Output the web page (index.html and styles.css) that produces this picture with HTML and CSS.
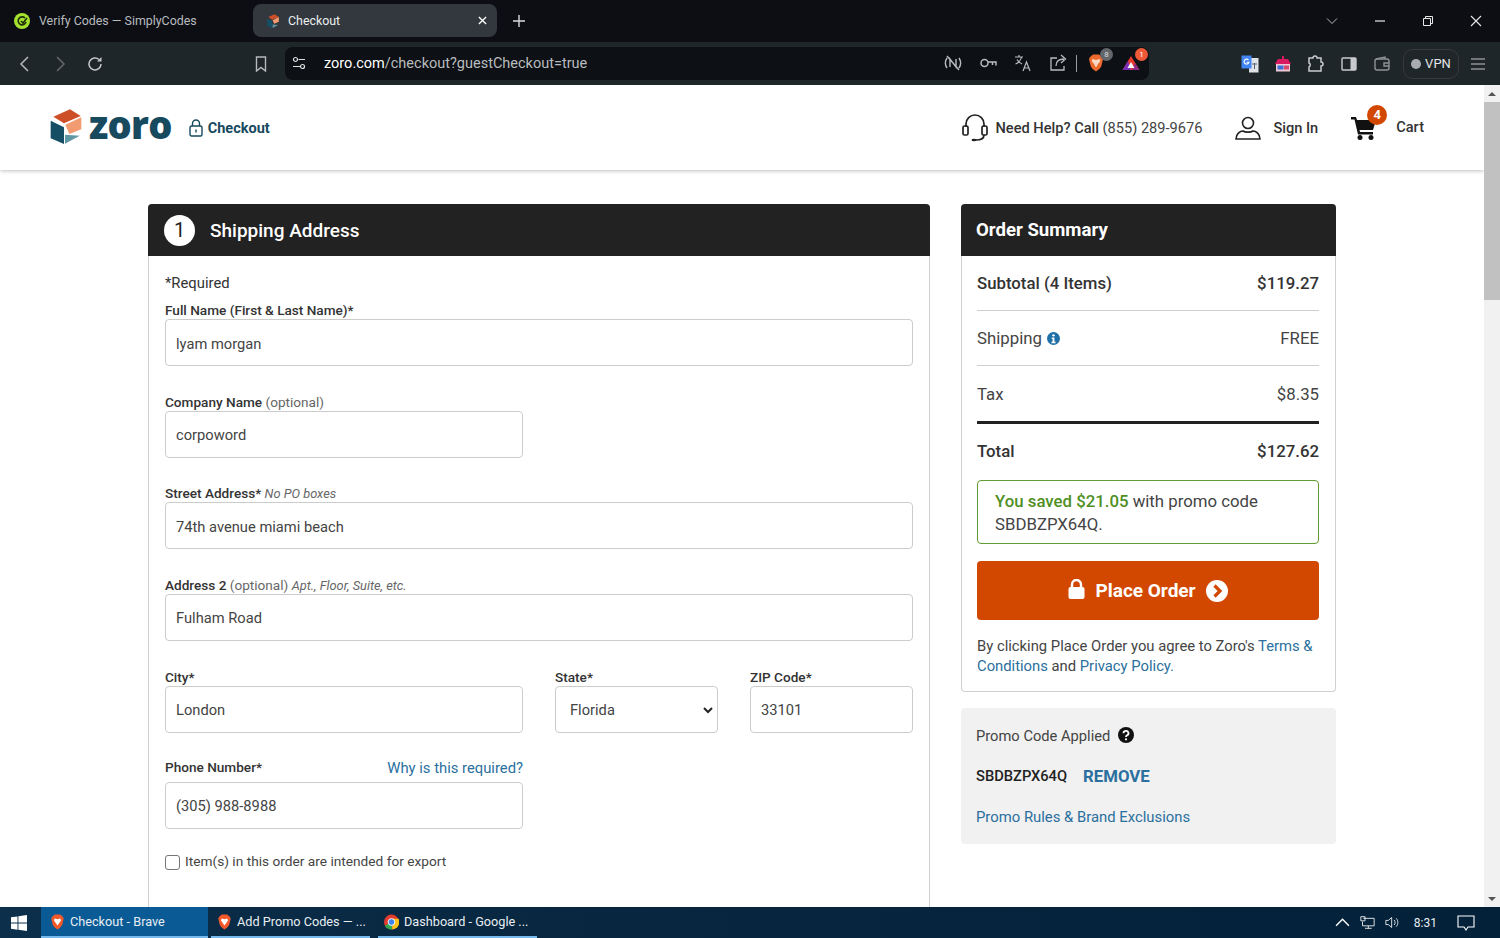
FILE: index.html
```html
<!DOCTYPE html>
<html lang="en">
<head>
    <meta charset="UTF-8">
    <title>Checkout</title>
    <link rel="stylesheet" href="styles.css">
</head>
<body>
    <div class="tabStrip">
        <div class="tab">
            <svg class="tabIcon" viewBox="0 0 16 16"><circle cx="8" cy="8" r="8" fill="#a4e22f"/><path d="M11 5a4 4 0 1 0 1 4M7 8l2 2 4-5" fill="none" stroke="#20300a" stroke-width="1.6"/></svg>
            <span>Verify Codes — SimplyCodes</span>
        </div>
        <div class="tab tabActive">
            <svg class="tabIcon" viewBox="0 0 44 46"><path d="M10 13l16-7 11 7-17 7z" fill="#cd4f27"/><path d="M37 13v12l-12 5-4-9z" fill="#f29b70"/><path d="M7 17l13 6v18L7 36z" fill="#164e66"/><path d="M21 32l14 1-14 8z" fill="#5f97a5"/></svg>
            <span>Checkout</span>
            <svg class="tabClose" viewBox="0 0 10 10"><path d="M1 1l8 8M9 1l-8 8" stroke="#fff" stroke-width="1.5"/></svg>
        </div>
        <svg class="newTab" viewBox="0 0 12 12"><path d="M6 0v12M0 6h12" stroke="#d8dadc" stroke-width="1.4"/></svg>
        <div class="windowBtns">
            <svg class="winIcon" viewBox="0 0 12 12"><path d="M1 3.5l5 5 5-5" fill="none" stroke="#b8bbbe"/></svg>
            <svg class="winIcon" viewBox="0 0 12 12"><path d="M1 6h10" stroke="#e8e8e8" stroke-width="1.2"/></svg>
            <svg class="winIcon" viewBox="0 0 12 12"><path d="M1.5 3.5h7v7h-7zM3.5 3.5v-2h7v7h-2" fill="none" stroke="#e8e8e8"/></svg>
            <svg class="winIcon" viewBox="0 0 12 12"><path d="M1 1l10 10M11 1l-10 10" stroke="#e8e8e8" stroke-width="1.1"/></svg>
        </div>
    </div>

    <div class="toolbar">
        <div class="navBtns">
            <svg class="navIcon" viewBox="0 0 16 16"><path d="M11 1L4 8l7 7" fill="none" stroke="#b5b9bc" stroke-width="1.5"/></svg>
            <svg class="navIcon" viewBox="0 0 16 16"><path d="M5 1l7 7-7 7" fill="none" stroke="#62686c" stroke-width="1.5"/></svg>
            <svg class="navIcon" viewBox="0 0 16 16"><path d="M14 8a6 6 0 1 1-2-4.5" fill="none" stroke="#c4c7ca" stroke-width="1.5"/><path d="M14.5 1v4.5H10z" fill="#c4c7ca"/></svg>
        </div>
        <svg class="bookmark" viewBox="0 0 12 16"><path d="M1.5 1h9v14L6 11.500 1.500 15z" fill="none" stroke="#b5b9bc" stroke-width="1.4"/></svg>
        <div class="addressBar">
            <svg class="tuneIcon" viewBox="0 0 14 14"><circle cx="3.500" cy="3.500" r="2" fill="none" stroke="#e0e0e0" stroke-width="1.200"/><circle cx="10.500" cy="10.500" r="2" fill="none" stroke="#e0e0e0" stroke-width="1.200"/><path d="M6.500 3.500H13M1 10.500h7" stroke="#e0e0e0" stroke-width="1.200"/></svg>
            <div class="url"><b>zoro.com</b>/checkout?guestCheckout=true</div>
            <div class="addressIcons">
                <svg class="barIcon" viewBox="0 0 18 18"><path d="M3 14c-2-3-2-7 0-10M15 4c2 3 2 7 0 10M6 13V5l6 8V5M3 2l12 14" fill="none" stroke="#b9bcbf" stroke-width="1.400"/></svg>
                <svg class="barIcon" viewBox="0 0 18 18"><circle cx="5.500" cy="9" r="3.500" fill="none" stroke="#b9bcbf" stroke-width="1.500"/><path d="M9 8h8v3.500M13.500 8v3" fill="none" stroke="#b9bcbf" stroke-width="1.500"/></svg>
                <svg class="barIcon" viewBox="0 0 18 18"><path d="M1 3h8M5 1v2M7.500 3C7 6 4 9 1.500 10M3 5.500c1 2 3 3.500 5 4.500M9 17l3.500-9 3.500 9M10.200 14h4.600" fill="none" stroke="#b9bcbf" stroke-width="1.200"/></svg>
                <svg class="barIcon" viewBox="0 0 18 18"><path d="M8 4H2v12h13v-4M7 12c0-5 3-7 8-7M12 1l4.500 4-4.500 4" fill="none" stroke="#b9bcbf" stroke-width="1.300"/></svg>
                <span class="barDivider"></span>
                <div class="extBadgeWrap">
                    <svg class="shieldIcon" viewBox="0 0 16 18"><path d="M2 3l3-2.500h6L14 3l1 2-1.500 6.500C13 14 10 16 8 17.500 6 16 3 14 2.500 11.500L1 5z" fill="#ee6a2c"/><path d="M4.500 5l3.500 1 3.500-1 .8 2-2.300 3-2 3.500-2-3.500-2.300-3z" fill="#fbd9c4"/></svg>
                    <span class="grayBadge">8</span>
                </div>
                <div class="extBadgeWrap">
                    <svg class="shieldIcon" viewBox="0 0 18 16"><path d="M9 1l8.500 14H.5z" fill="#e6392f"/><path d="M.5 15L6 6l3 9z" fill="#7a2fb8"/><path d="M17.500 15L13 8l-3 7z" fill="#8c2a86"/><path d="M9 7l3.500 6h-7z" fill="#fff"/></svg>
                    <span class="redBadge">1</span>
                </div>
            </div>
        </div>
        <div class="extensions">
            <svg class="extIcon" viewBox="0 0 18 18"><path d="M8 3h9.500v14.500H8z" fill="#dfe3e8"/><path d="M.5 .5h10v13H.5z" fill="#4285f4"/><path d="M7.500 5a2.500 2.500 0 1 0 .5 2.200H5.500" fill="none" stroke="#fff" stroke-width="1.100"/><path d="M11 9h5M13.500 8v6" stroke="#5a6470"/></svg>
            <svg class="extIcon" viewBox="0 0 18 18"><path d="M9 1v3" stroke="#d81b60" stroke-width="2"/><path d="M4 4h10l3 5H1z" fill="#d81b60"/><path d="M2 9h14v7.500H2z" fill="#f0c8d6"/><path d="M3.500 10.500h6v4h-6z" fill="#3b6fd4"/><path d="M10 10.500h5v4h-5z" fill="#d84a6a"/></svg>
            <svg class="extIcon" viewBox="0 0 18 18"><path d="M2 3h4a2 2 0 0 1 4 0h4v4a2 2 0 0 1 0 4v5H2v-4a2.200 2.200 0 0 0 0-4z" fill="none" stroke="#c8cbce" stroke-width="1.500"/></svg>
            <svg class="extIcon" viewBox="0 0 18 18"><rect x="2" y="3" width="14" height="12" rx="1" fill="none" stroke="#c8cbce" stroke-width="1.400"/><rect x="10.500" y="3" width="5.500" height="12" fill="#c8cbce"/></svg>
            <svg class="extIcon" viewBox="0 0 18 18"><rect x="2" y="4" width="14" height="11" rx="2" fill="none" stroke="#8e9296" stroke-width="1.400"/><path d="M16 8h-5v3h5M3 4l9-2v2" fill="none" stroke="#8e9296" stroke-width="1.400"/></svg>
            <div class="vpnBtn"><span class="vpnDot"></span>VPN</div>
            <svg class="menuIcon" viewBox="0 0 14 12"><path d="M0 1h14M0 6h14M0 11h14" stroke="#c4c7ca" stroke-width="1.200"/></svg>
        </div>
    </div>

    <div class="viewport">
        <div class="page">
            <header class="siteHeader">
                <div class="logoWrap">
                    <svg class="logoMark" viewBox="0 0 132 138"><path d="M28 38l50-22 32 20-50 22z" fill="#cd4f27"/><path d="M112 40v36L76 90 64 62z" fill="#f29b70"/><path d="M20 50l40 20v50l-40-17z" fill="#164e66"/><path d="M63 92l44 3-44 24z" fill="#5f97a5"/></svg>
                    <span class="logoText">zoro</span>
                    <svg class="lockOutline" viewBox="0 0 14 18"><rect x="1" y="7" width="12" height="10" rx="1.500" fill="none" stroke="#174a5e" stroke-width="1.400"/><path d="M3.500 7V4.500a3.500 3.500 0 0 1 7 0V7M7 10.500v3" fill="none" stroke="#174a5e" stroke-width="1.400"/></svg>
                    <span class="checkoutLabel">Checkout</span>
                </div>
                <div class="headerLinks">
                    <div class="helpLink">
                        <svg class="headsetIcon" viewBox="0 0 26 28"><path d="M4 13V10a9 9 0 0 1 18 0v3" fill="none" stroke="#222" stroke-width="1.700"/><rect x="1" y="12" width="5" height="9" rx="1.500" fill="none" stroke="#222" stroke-width="1.700"/><rect x="20" y="12" width="5" height="9" rx="1.500" fill="none" stroke="#222" stroke-width="1.700"/><path d="M22 21c0 3-3 5-8 5" fill="none" stroke="#222" stroke-width="1.700"/><ellipse cx="12" cy="26" rx="2.500" ry="1.300" fill="#222"/></svg>
                        <span><b>Need Help? Call</b> (855) 289-9676</span>
                    </div>
                    <div class="signIn">
                        <svg class="userIcon" viewBox="0 0 26 24"><circle cx="13" cy="7" r="5.500" fill="none" stroke="#222" stroke-width="1.600"/><path d="M1 23c0-5 4-8 7-8 2 1.500 8 1.500 10 0 3 0 7 3 7 8z" fill="none" stroke="#222" stroke-width="1.600"/></svg>
                        <b>Sign In</b>
                    </div>
                    <div class="cartLink">
                        <svg class="cartIcon" viewBox="0 0 26 24"><path d="M0 1h5l1 3h19l-3 10H8.500l.5 2h13v2.500H7L3.500 3.500H0z" fill="#111"/><circle cx="9" cy="21.500" r="2.500" fill="#111"/><circle cx="20" cy="21.500" r="2.500" fill="#111"/></svg>
                        <span class="cartCount">4</span>
                        <b class="cartText">Cart</b>
                    </div>
                </div>
            </header>

            <main class="columns">
                <section class="shippingCard">
                    <h2 class="cardHead"><span class="stepNum">1</span>Shipping Address</h2>
                    <div class="formBody">
                        <p class="requiredNote">*Required</p>
                        <div class="field">
                            <label class="fieldLabel"><b>Full Name (First &amp; Last Name)*</b></label>
                            <div class="input">lyam morgan</div>
                        </div>
                        <div class="field half">
                            <label class="fieldLabel"><b>Company Name</b> (optional)</label>
                            <div class="input">corpoword</div>
                        </div>
                        <div class="field">
                            <label class="fieldLabel"><b>Street Address*</b> <i>No PO boxes</i></label>
                            <div class="input">74th avenue miami beach</div>
                        </div>
                        <div class="field">
                            <label class="fieldLabel"><b>Address 2</b> (optional) <i>Apt., Floor, Suite, etc.</i></label>
                            <div class="input">Fulham Road</div>
                        </div>
                        <div class="cityRow">
                            <div class="field">
                                <label class="fieldLabel"><b>City*</b></label>
                                <div class="input">London</div>
                            </div>
                            <div class="field">
                                <label class="fieldLabel"><b>State*</b></label>
                                <div class="input selectBox">Florida
                                    <svg class="selectArrow" viewBox="0 0 10 7"><path d="M1 1l4 4 4-4" fill="none" stroke="#222" stroke-width="2"/></svg>
                                </div>
                            </div>
                            <div class="field">
                                <label class="fieldLabel"><b>ZIP Code*</b></label>
                                <div class="input">33101</div>
                            </div>
                        </div>
                        <div class="field half">
                            <label class="fieldLabel phoneLabel"><b>Phone Number*</b><a>Why is this required?</a></label>
                            <div class="input">(305) 988-8988</div>
                        </div>
                        <div class="exportRow"><span class="checkbox"></span>Item(s) in this order are intended for export</div>
                    </div>
                </section>

                <aside class="sideCol">
                    <section class="summaryCard">
                        <h2 class="cardHead summaryHead">Order Summary</h2>
                        <div class="summaryBody">
                            <div class="sumRow strongRow"><b>Subtotal (4 Items)</b><b>$119.27</b></div>
                            <div class="sumRow"><span>Shipping <svg class="infoIcon" viewBox="0 0 14 14"><circle cx="7" cy="7" r="7" fill="#1f6fa8"/><circle cx="7" cy="3.600" r="1.300" fill="#fff"/><path d="M5 6h3v4.500h1.200V12H4.800v-1.500H6V7.300H5z" fill="#fff"/></svg></span><span>FREE</span></div>
                            <div class="sumRow taxRow"><span>Tax</span><span>$8.35</span></div>
                            <div class="sumRow totalRow"><b>Total</b><b>$127.62</b></div>
                            <div class="savedBox">
                                <div><b>You saved $21.05</b> with promo code</div>
                                <div>SBDBZPX64Q.</div>
                            </div>
                            <button class="placeOrder">
                                <svg class="orderLock" viewBox="0 0 16 20"><path d="M3.500 9V5.500a4.500 4.500 0 0 1 9 0V9" fill="none" stroke="#fff" stroke-width="2.400"/><rect x="0" y="8" width="16" height="12" rx="2" fill="#fff"/></svg>
                                Place Order
                                <svg class="orderArrow" viewBox="0 0 22 22"><circle cx="11" cy="11" r="11" fill="#fff"/><path d="M8.500 5.500l5.500 5.500-5.500 5.500" fill="none" stroke="#d34800" stroke-width="3.200"/></svg>
                            </button>
                            <div class="terms">
                                <div>By clicking Place Order you agree to Zoro's <a>Terms &amp;</a></div>
                                <div><a>Conditions</a> and <a>Privacy Policy.</a></div>
                            </div>
                        </div>
                    </section>
                    <section class="promoCard">
                        <div class="promoTitle">Promo Code Applied
                            <svg class="helpIcon" viewBox="0 0 16 16"><circle cx="8" cy="8" r="8" fill="#111"/><path d="M5.500 6.300a2.500 2.300 0 1 1 3.600 2C8.300 8.800 8 9.200 8 10" fill="none" stroke="#fff" stroke-width="1.800"/><circle cx="8" cy="12.300" r="1.100" fill="#fff"/></svg>
                        </div>
                        <div class="promoCode"><b>SBDBZPX64Q</b><a>REMOVE</a></div>
                        <a class="promoRules">Promo Rules &amp; Brand Exclusions</a>
                    </section>
                </aside>
            </main>
        </div>
        <div class="scrollbar">
            <span class="scrollUp"></span>
            <div class="scrollTrack"><div class="scrollThumb"></div></div>
            <span class="scrollDown"></span>
        </div>
    </div>

    <footer class="taskbar">
        <svg class="winLogo" viewBox="0 0 16 16"><path d="M0 2.300l6.500-.9v6.200H0zM7.400 1.300L16 0v7.600H7.400zM0 8.500h6.500v6.200L0 13.800zM7.400 8.500H16V16l-8.600-1.300z" fill="#fff"/></svg>
        <div class="taskItem taskActive">
            <svg class="taskIcon" viewBox="0 0 16 18"><path d="M2 3l3-2.500h6L14 3l1 2-1.500 6.500C13 14 10 16 8 17.500 6 16 3 14 2.500 11.500L1 5z" fill="#f1592a"/><path d="M5 5l3 1 3-1 1 2-2 3-2 3-2-3-2-3z" fill="#fff"/></svg>
            <span>Checkout - Brave</span>
        </div>
        <div class="taskItem">
            <svg class="taskIcon" viewBox="0 0 16 18"><path d="M2 3l3-2.500h6L14 3l1 2-1.500 6.500C13 14 10 16 8 17.500 6 16 3 14 2.500 11.500L1 5z" fill="#f1592a"/><path d="M5 5l3 1 3-1 1 2-2 3-2 3-2-3-2-3z" fill="#fff"/></svg>
            <span>Add Promo Codes — ...</span>
        </div>
        <div class="taskItem">
            <svg class="taskIcon" viewBox="0 0 16 16"><circle cx="8" cy="8" r="8" fill="#e33b2e"/><path d="M8 8L1 12a8 8 0 0 0 8 4z" fill="#2da94f"/><path d="M8 4.500h7.500A8 8 0 0 1 9 16z" fill="#fbc116"/><circle cx="8" cy="8" r="3.600" fill="#3f83ea" stroke="#fff" stroke-width="1"/></svg>
            <span>Dashboard - Google ...</span>
        </div>
        <div class="tray">
            <svg class="trayIcon" viewBox="0 0 14 14"><path d="M1 10l6-6 6 6" fill="none" stroke="#fff" stroke-width="1.300"/></svg>
            <svg class="trayIcon" viewBox="0 0 18 16"><path d="M4 3h13v9H3V7M10 12v3M6 15h8M1 1h5v5H1z" fill="none" stroke="#fff"/></svg>
            <svg class="trayIcon" viewBox="0 0 18 16"><path d="M1 5.500h3L8 2v12l-4-3.500H1zM11 5c1.500 2 1.500 4 0 6M13.500 3c2.500 3 2.500 7 0 10" fill="none" stroke="#fff"/></svg>
            <span class="clock">8:31</span>
            <svg class="noteIcon" viewBox="0 0 18 16"><path d="M1 1h16v11h-6l-2 3-2-3H1z" fill="none" stroke="#fff" stroke-width="1.100"/></svg>
        </div>
    </footer>
</body>
</html>
```

FILE: styles.css
```css
* {
    box-sizing: border-box;
}
html, body {
    height: 100%;
}
body {
    margin: 0;
    display: flex;
    flex-direction: column;
    height: 938px;
    overflow: hidden;
    font-family: Roboto, 'Liberation Sans', sans-serif;
    color: #333;
    background: #fff;
}
p, h2 {
    margin: 0;
}

/* browser chrome */
.tabStrip {
    height: 42px;
    flex: none;
    display: flex;
    align-items: center;
    padding: 0 0 0 8px;
    background: #0c0e14;
    color: #b8bbbe;
    font-size: 12.4px;
}
.tab {
    width: 237px;
    height: 33px;
    margin-top: -1px;
    padding: 0 8px 0 6px;
    display: flex;
    align-items: center;
    border-radius: 8px;
}
.tabActive {
    width: 244px;
    margin-left: 8px;
    padding: 0 10px 0 11px;
    background: #32383d;
    color: #eceeef;
}
.tabIcon {
    width: 16px;
    height: 16px;
    margin-right: 9px;
    flex: none;
}
.tabActive .tabIcon {
    width: 18px;
    height: 18px;
    margin-right: 6px;
}
.tabClose {
    width: 9px;
    height: 9px;
    margin: 0 0 0 auto;
}
.newTab {
    width: 12px;
    height: 12px;
    margin-left: 16px;
}
.windowBtns {
    margin-left: auto;
    display: flex;
    gap: 36px;
    padding-right: 18px;
}
.winIcon {
    width: 12px;
    height: 12px;
}
.toolbar {
    height: 43px;
    flex: none;
    display: flex;
    align-items: center;
    background: #1f2629;
}
.navBtns {
    width: 255px;
    padding-left: 17px;
    display: flex;
    gap: 19px;
}
.navIcon {
    width: 16px;
    height: 16px;
}
.bookmark {
    width: 12px;
    height: 16px;
}
.addressBar {
    width: 864px;
    height: 33px;
    margin: -1px 0 0 18px;
    padding: 0 9px 0 7px;
    display: flex;
    align-items: center;
    background: #0d1014;
    border-radius: 8px;
    color: #b9bcbf;
    font-size: 14.5px;
}
.tuneIcon {
    width: 14px;
    height: 14px;
}
.url {
    margin-left: 18px;
}
.url b {
    font-weight: 400;
    color: #fff;
}
.addressIcons {
    margin-left: auto;
    display: flex;
    align-items: center;
    gap: 17px;
}
.barIcon {
    width: 18px;
    height: 18px;
}
.barDivider {
    width: 1px;
    height: 17px;
    margin: 0 -7px 0 -8px;
    background: #9a9da0;
}
.extBadgeWrap {
    position: relative;
    display: flex;
}
.shieldIcon {
    width: 18px;
    height: 18px;
}
.grayBadge, .redBadge {
    position: absolute;
    top: -6px;
    right: -8px;
    width: 13px;
    height: 13px;
    border-radius: 50%;
    background: #62666b;
    color: #ddd;
    font-size: 8px;
    line-height: 13px;
    text-align: center;
}
.redBadge {
    background: #ee5a38;
    color: #fff;
}
.extensions {
    margin-left: 92px;
    display: flex;
    align-items: center;
    gap: 15px;
}
.extIcon {
    width: 18px;
    height: 18px;
}
.vpnBtn {
    width: 56px;
    height: 30px;
    margin-left: -3px;
    display: flex;
    align-items: center;
    justify-content: center;
    gap: 4px;
    border: 1px solid #33393d;
    border-radius: 10px;
    color: #e3e5e6;
    font-size: 13px;
}
.vpnDot {
    width: 10px;
    height: 10px;
    border-radius: 50%;
    background: #a9adb1;
}
.menuIcon {
    width: 14px;
    height: 12px;
    margin-left: -3px;
}

/* page */
.viewport {
    flex: 1;
    min-height: 0;
    display: flex;
}
.page {
    flex: 1;
    min-width: 0;
    overflow: hidden;
}
.siteHeader {
    height: 85px;
    padding: 0 60px 0 44px;
    display: flex;
    align-items: center;
    justify-content: space-between;
    box-shadow: 0 1px 4px rgba(0, 0, 0, 0.25);
}
.logoWrap {
    display: flex;
    align-items: center;
}
.logoMark {
    width: 44px;
    height: 46px;
    margin-top: -1px;
}
.logoText {
    margin: -8px 0 0 1px;
    color: #174a5e;
    font-family: 'Open Sans', sans-serif;
    font-size: 38px;
    font-weight: 800;
    line-height: 1;
    letter-spacing: -0.7px;
}
.lockOutline {
    width: 14px;
    height: 18px;
    margin: 1px 0 0 17px;
}
.checkoutLabel {
    margin: 1px 0 0 5px;
    color: #174a5e;
    font-size: 14.5px;
    font-weight: 700;
}
.headerLinks {
    display: flex;
    align-items: center;
    font-size: 14.6px;
    color: #444;
}
.headerLinks b {
    color: #333;
    font-weight: 500;
}
.helpLink, .signIn, .cartLink {
    display: flex;
    align-items: center;
}
.headsetIcon {
    width: 26px;
    height: 28px;
    margin-right: 8px;
}
.signIn {
    margin-left: 33px;
}
.userIcon {
    width: 26px;
    height: 24px;
    margin-right: 12px;
}
.cartLink {
    position: relative;
    margin-left: 33px;
}
.cartIcon {
    width: 26px;
    height: 24px;
    margin-right: 19px;
}
.cartText {
    margin-top: -2px;
}
.cartCount {
    position: absolute;
    top: -11px;
    left: 16px;
    width: 20px;
    height: 20px;
    border-radius: 50%;
    background: #d34800;
    color: #fff;
    font-size: 13px;
    font-weight: 700;
    line-height: 20px;
    text-align: center;
}
.columns {
    padding: 34px 0 0 148px;
    display: flex;
    align-items: flex-start;
    gap: 31px;
}
.shippingCard {
    width: 782px;
    border: 1px solid #d0d0d0;
    border-top: 0;
    border-radius: 4px 4px 0 0;
}
.cardHead {
    height: 52px;
    margin: 0 -1px;
    padding: 0 16px;
    display: flex;
    align-items: center;
    background: #222;
    color: #fff;
    font-size: 19px;
    font-weight: 500;
    border-radius: 4px 4px 0 0;
}
.stepNum {
    width: 31px;
    height: 31px;
    margin-right: 15px;
    border-radius: 50%;
    background: #fff;
    color: #222;
    font-size: 20px;
    font-weight: 400;
    line-height: 31px;
    text-align: center;
}
.formBody {
    padding: 19px 16px 120px;
}
.requiredNote {
    font-size: 14.8px;
    line-height: 17px;
    margin-bottom: 10px;
}
.field {
    margin-bottom: 27.67px;
}
.half {
    width: 358px;
}
.fieldLabel {
    display: block;
    height: 17px;
    font-size: 13.6px;
    line-height: 17px;
    color: #666;
}
.fieldLabel b {
    font-weight: 500;
    color: #333;
}
.fieldLabel i {
    font-size: 12.8px;
}
.input {
    height: 47px;
    padding: 2px 10px 0;
    display: flex;
    align-items: center;
    border: 1px solid #ccc;
    border-radius: 4px;
    font-size: 14.7px;
    color: #444;
}
.cityRow {
    display: grid;
    grid-template-columns: 358px 163px 163px;
    column-gap: 32px;
    margin-bottom: -1.67px;
}
.selectBox {
    justify-content: space-between;
    padding: 2px 4px 0 14px;
}
.selectArrow {
    width: 10px;
    height: 7px;
}
.phoneLabel {
    display: flex;
    justify-content: space-between;
    height: 23px;
}
.phoneLabel a {
    margin-top: 1px;
    color: #2a6f9e;
    font-size: 14.8px;
}
.exportRow {
    margin-top: -4px;
    display: flex;
    align-items: center;
    color: #444;
    font-size: 13.7px;
}
.checkbox {
    width: 15px;
    height: 15px;
    margin: 3px 5px 0 0;
    border: 1px solid #767676;
    border-radius: 3px;
}
.sideCol {
    width: 375px;
}
.summaryCard {
    border: 1px solid #d0d0d0;
    border-top: 0;
    border-radius: 4px;
}
.summaryHead {
    padding: 0 15px;
    font-size: 18.6px;
    font-weight: 700;
}
.summaryBody {
    padding: 0 16px 15px 15px;
}
.sumRow {
    height: 55px;
    display: flex;
    align-items: center;
    justify-content: space-between;
    border-bottom: 1px solid #d0d0d0;
    font-size: 16.8px;
    color: #444;
}
.sumRow b {
    font-weight: 500;
    color: #333;
}
.infoIcon {
    width: 13px;
    height: 13px;
    margin-left: 1px;
    vertical-align: -1px;
}
.taxRow {
    height: 58px;
    border-bottom: 3px solid #222;
}
.totalRow {
    height: 56px;
    padding-bottom: 2px;
    border-bottom: 0;
}
.savedBox {
    height: 64px;
    padding: 9px 17px;
    border: 1px solid #5f9a33;
    border-radius: 4px;
    font-size: 16.8px;
    line-height: 23px;
    color: #444;
}
.savedBox b {
    font-weight: 500;
    color: #4f8f1f;
}
.placeOrder {
    width: 100%;
    height: 59px;
    margin-top: 17px;
    display: flex;
    align-items: center;
    justify-content: center;
    border: 0;
    border-radius: 4px;
    background: #d34800;
    color: #fff;
    font-family: inherit;
    font-size: 19px;
    font-weight: 700;
}
.orderLock {
    width: 17px;
    height: 20px;
    margin: -4px 10px 0 0;
}
.orderArrow {
    width: 22px;
    height: 22px;
    margin-left: 10px;
}
.terms {
    margin-top: 16px;
    font-size: 14.8px;
    line-height: 20px;
    color: #444;
}
.terms a {
    color: #2a6f9e;
}
.promoCard {
    height: 136px;
    margin-top: 16px;
    padding: 18px 15px;
    background: #f1f1f1;
    border-radius: 4px;
    font-size: 14.7px;
    color: #444;
}
.promoTitle {
    display: flex;
    align-items: center;
    height: 20px;
}
.helpIcon {
    width: 16px;
    height: 16px;
    margin: -3px 0 0 8px;
}
.promoCode {
    margin-top: 19px;
    display: flex;
    align-items: center;
    height: 22px;
}
.promoCode b {
    font-weight: 500;
    color: #222;
}
.promoCode a {
    margin-left: 16px;
    color: #2a6f9e;
    font-size: 16.800px;
    font-weight: 700;
}
.promoRules {
    display: block;
    margin-top: 21px;
    color: #2a6f9e;
    font-size: 14.85px;
}
.scrollbar {
    width: 16px;
    flex: none;
    display: flex;
    flex-direction: column;
    align-items: center;
    background: #f1f1f1;
}
.scrollUp, .scrollDown {
    flex: none;
    width: 0;
    height: 0;
    margin: 7px 0 6px;
    border-left: 4px solid transparent;
    border-right: 4px solid transparent;
    border-bottom: 4px solid #555;
}
.scrollDown {
    border-bottom: 0;
    border-top: 4px solid #555;
}
.scrollTrack {
    flex: 1;
    width: 100%;
}
.scrollThumb {
    width: 100%;
    height: 198px;
    background: #c1c1c1;
}

/* windows taskbar */
.taskbar {
    height: 31px;
    flex: none;
    display: flex;
    align-items: stretch;
    background: linear-gradient(90deg, #0c2f4c, #08263f 40%, #032139);
    color: #e8eef2;
    font-size: 12.7px;
}
.winLogo {
    width: 16px;
    height: 16px;
    margin: 8px 14px 0 11px;
}
.taskItem {
    width: 159px;
    padding: 0 0 0 6px;
    display: flex;
    align-items: center;
    gap: 5px;
    border-bottom: 2px solid #76b9ed;
    margin-right: 8px;
    white-space: nowrap;
}
.taskActive {
    width: 167px;
    margin-right: 3px;
    padding-left: 9px;
    background: #0a5a96;
}
.taskIcon {
    width: 15px;
    height: 16px;
}
.tray {
    margin-left: auto;
    display: flex;
    align-items: center;
    gap: 10px;
    padding-right: 25px;
}
.trayIcon {
    width: 15px;
    height: 15px;
}
.clock {
    margin: 0 10px 0 4px;
    font-size: 12px;
}
.noteIcon {
    width: 18px;
    height: 16px;
}
```
